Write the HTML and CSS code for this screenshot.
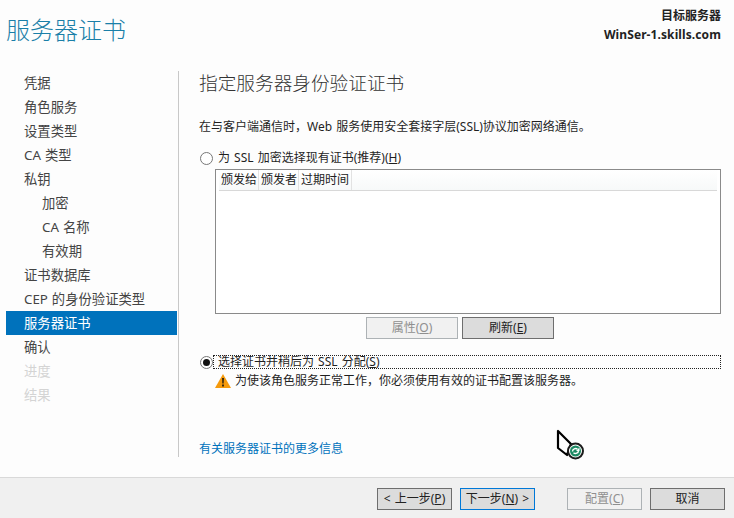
FILE: index.html
```html
<!DOCTYPE html>
<html lang="zh-CN">
<head>
<meta charset="utf-8">
<title>服务器证书</title>
<link rel="stylesheet" href="styles.css">
</head>
<body>
<div class="wizard">
  <header class="top">
    <h1 class="title">服务器证书</h1>
    <div class="target">
      <div class="target-label">目标服务器</div>
      <div class="target-name">WinSer-1.skills.com</div>
    </div>
  </header>
  <div class="middle">
    <nav class="nav">
      <div class="nav-item">凭据</div>
      <div class="nav-item">角色服务</div>
      <div class="nav-item">设置类型</div>
      <div class="nav-item">CA 类型</div>
      <div class="nav-item">私钥</div>
      <div class="nav-item sub">加密</div>
      <div class="nav-item sub">CA 名称</div>
      <div class="nav-item sub">有效期</div>
      <div class="nav-item">证书数据库</div>
      <div class="nav-item">CEP 的身份验证类型</div>
      <div class="nav-item active">服务器证书</div>
      <div class="nav-item">确认</div>
      <div class="nav-item off">进度</div>
      <div class="nav-item off">结果</div>
    </nav>
    <main class="content">
      <h2 class="heading">指定服务器身份验证证书</h2>
      <p class="intro">在与客户端通信时，Web 服务使用安全套接字层(SSL)协议加密网络通信。</p>
      <div class="radio-row first">
        <span class="radio"></span>
        <span class="radio-text">为 SSL 加密选择现有证书(推荐)(<u>H</u>)</span>
      </div>
      <div class="list">
        <div class="list-head">
          <span class="col c1">颁发给</span>
          <span class="col c2">颁发者</span>
          <span class="col c3">过期时间</span>
        </div>
      </div>
      <div class="list-actions">
        <button class="btn wide disabled">属性(<u>O</u>)</button>
        <button class="btn wide">刷新(<u>E</u>)</button>
      </div>
      <div class="radio-row second">
        <span class="radio checked"></span>
        <span class="radio-text focus">选择证书并稍后为 SSL 分配(<u>S</u>)</span>
      </div>
      <div class="warning">
        <svg class="warn-icon" width="16" height="14" viewBox="0 0 16 14">
          <path d="M8 0 16 14H0Z" fill="#f59a0c"/>
          <path d="M7 4h2L8.7 9.5H7.3Z" fill="#3a2a10"/>
          <rect x="7" y="10.5" width="2" height="2" fill="#3a2a10"/>
        </svg>
        <span>为使该角色服务正常工作，你必须使用有效的证书配置该服务器。</span>
      </div>
      <a class="more" href="#">有关服务器证书的更多信息</a>
    </main>
  </div>
  <footer class="foot">
    <button class="btn step">&lt; 上一步(<u>P</u>)</button>
    <button class="btn step next">下一步(<u>N</u>) &gt;</button>
    <button class="btn step disabled apply">配置(<u>C</u>)</button>
    <button class="btn step cancel">取消</button>
  </footer>
  <svg class="cursor" width="30" height="32" viewBox="0 0 30 32">
    <path d="M2 2V19L11 26 15 15Z" fill="#fff" stroke="#000" stroke-width="2.2" stroke-linejoin="round"/>
    <circle cx="19.5" cy="22" r="7.5" fill="#fff" stroke="#1c1c1c" stroke-width="2"/>
    <circle cx="19.5" cy="22" r="5.5" fill="#1d8a63"/>
    <path d="M16.5 22.5a3 3 0 0 1 5-2.2M22.5 21.5a3 3 0 0 1-5 2.2" fill="none" stroke="#fff" stroke-width="1.4"/>
    <path d="M23.5 18.5v3.5h-3.5Z" fill="#fff"/>
  </svg>
</div>
</body>
</html>
```

FILE: styles.css
```css
* { box-sizing: border-box; }
html, body { margin: 0; padding: 0; }
body {
  width: 734px;
  height: 518px;
  overflow: hidden;
  background: #fdfdfd;
  color: #1f1f1f;
  font-family: "Noto Sans", "Noto Sans CJK SC", sans-serif;
  font-size: 12px;
  word-spacing: 1px;
}
.wizard {
  position: relative;
  width: 734px;
  height: 518px;
  display: flex;
  flex-direction: column;
}
.top {
  height: 71px;
  flex: none;
  display: flex;
  justify-content: space-between;
  padding: 7px 13px 0 6px;
}
.title {
  margin: 0;
  font-size: 24px;
  font-weight: 300;
  line-height: 46px;
  color: #1a7fa8;
}
.target { text-align: right; font-weight: 700; font-size: 12px; color: #222; }
.target-label { line-height: 18px; }
.target-name { line-height: 20px; letter-spacing: 0.1px; }
.middle { flex: 1; display: flex; min-height: 0; padding-bottom: 20px; }
.nav { width: 178px; flex: none; padding-left: 6px; padding-right: 1px; }
.nav-item {
  height: 24px;
  line-height: 24px;
  padding-left: 18px;
  font-size: 13.33px;
  color: #444;
  word-spacing: 0.5px;
}
.nav-item.sub { padding-left: 36px; }
.nav-item.active { background: #0072bc; color: #fff; }
.nav-item.off { color: #d4d4d4; }
.content {
  flex: 1;
  border-left: 1px solid #c8c8c8;
  padding-left: 20px;
  padding-right: 13px;
  display: flex;
  flex-direction: column;
}
.content > * { flex: none; }
.heading {
  margin: 0;
  font-size: 18.67px;
  font-weight: 300;
  line-height: 24px;
  color: #333;
}
.intro { margin: 22px 0 0; line-height: 20px; }
.radio-row { display: flex; align-items: center; height: 14px; }
.radio-row.first { margin-top: 14px; }
.radio {
  width: 13px;
  height: 13px;
  border: 1px solid #777;
  border-radius: 50%;
  background: #fff;
  flex: none;
  margin-left: 1px;
  position: relative;
}
.radio.checked::after {
  content: "";
  position: absolute;
  left: 2px;
  top: 2px;
  width: 7px;
  height: 7px;
  border-radius: 50%;
  background: #111;
}
.radio-text { margin-left: 5px; line-height: 14px; }
.list {
  height: 145px;
  margin: 4px 0 0 16px;
  border: 1px solid #8a8a8a;
  background: #fff;
  padding-left: 3px;
  padding-right: 3px;
}
.list-head {
  height: 21px;
  display: flex;
  border-bottom: 1px solid #d8d8d8;
  background: linear-gradient(#fff, #f7f9f9);
}
.col {
  border-right: 1px solid #e2e2e2;
  line-height: 20px;
  padding-left: 2px;
  color: #222;
}
.c1 { width: 40px; }
.c2 { width: 40px; }
.c3 { width: 53px; }
.list-actions {
  display: flex;
  justify-content: center;
  gap: 4px;
  margin: 3px 0 0;
}
.btn {
  font: inherit;
  word-spacing: inherit;
  height: 22px;
  padding: 0;
  border: 1px solid #6e6e6e;
  background: #dcdcdc;
  color: #222;
  line-height: 18px;
}
.btn.wide { width: 92px; }
.btn.disabled { background: #f1f1f1; border-color: #adb2b5; color: #8f8f8f; }
.radio-row.second { margin-top: 16px; }
.radio-text.focus {
  flex: 1;
  outline: 1px dotted #222;
  outline-offset: -1px;
  padding-left: 5px;
  margin-left: 0;
}
.warning {
  display: flex;
  align-items: center;
  gap: 4px;
  margin: 4px 0 0 16px;
  height: 16px;
  line-height: 16px;
}
.warn-icon { flex: none; }
.more {
  margin-top: 52px;
  color: #0072bc;
  text-decoration: none;
  line-height: 16px;
}
.foot {
  height: 41px;
  flex: none;
  background: #f0f0f0;
  border-top: 1px solid #d9d9d9;
  display: flex;
  align-items: flex-start;
  padding: 10px 0 0 377px;
}
.btn.step { width: 75px; }
.btn.next { margin-left: 8px; border-color: #0078d7; }
.btn.apply { margin-left: 32px; }
.btn.cancel { margin-left: 8px; }
.cursor { position: absolute; left: 556px; top: 429px; }
```
